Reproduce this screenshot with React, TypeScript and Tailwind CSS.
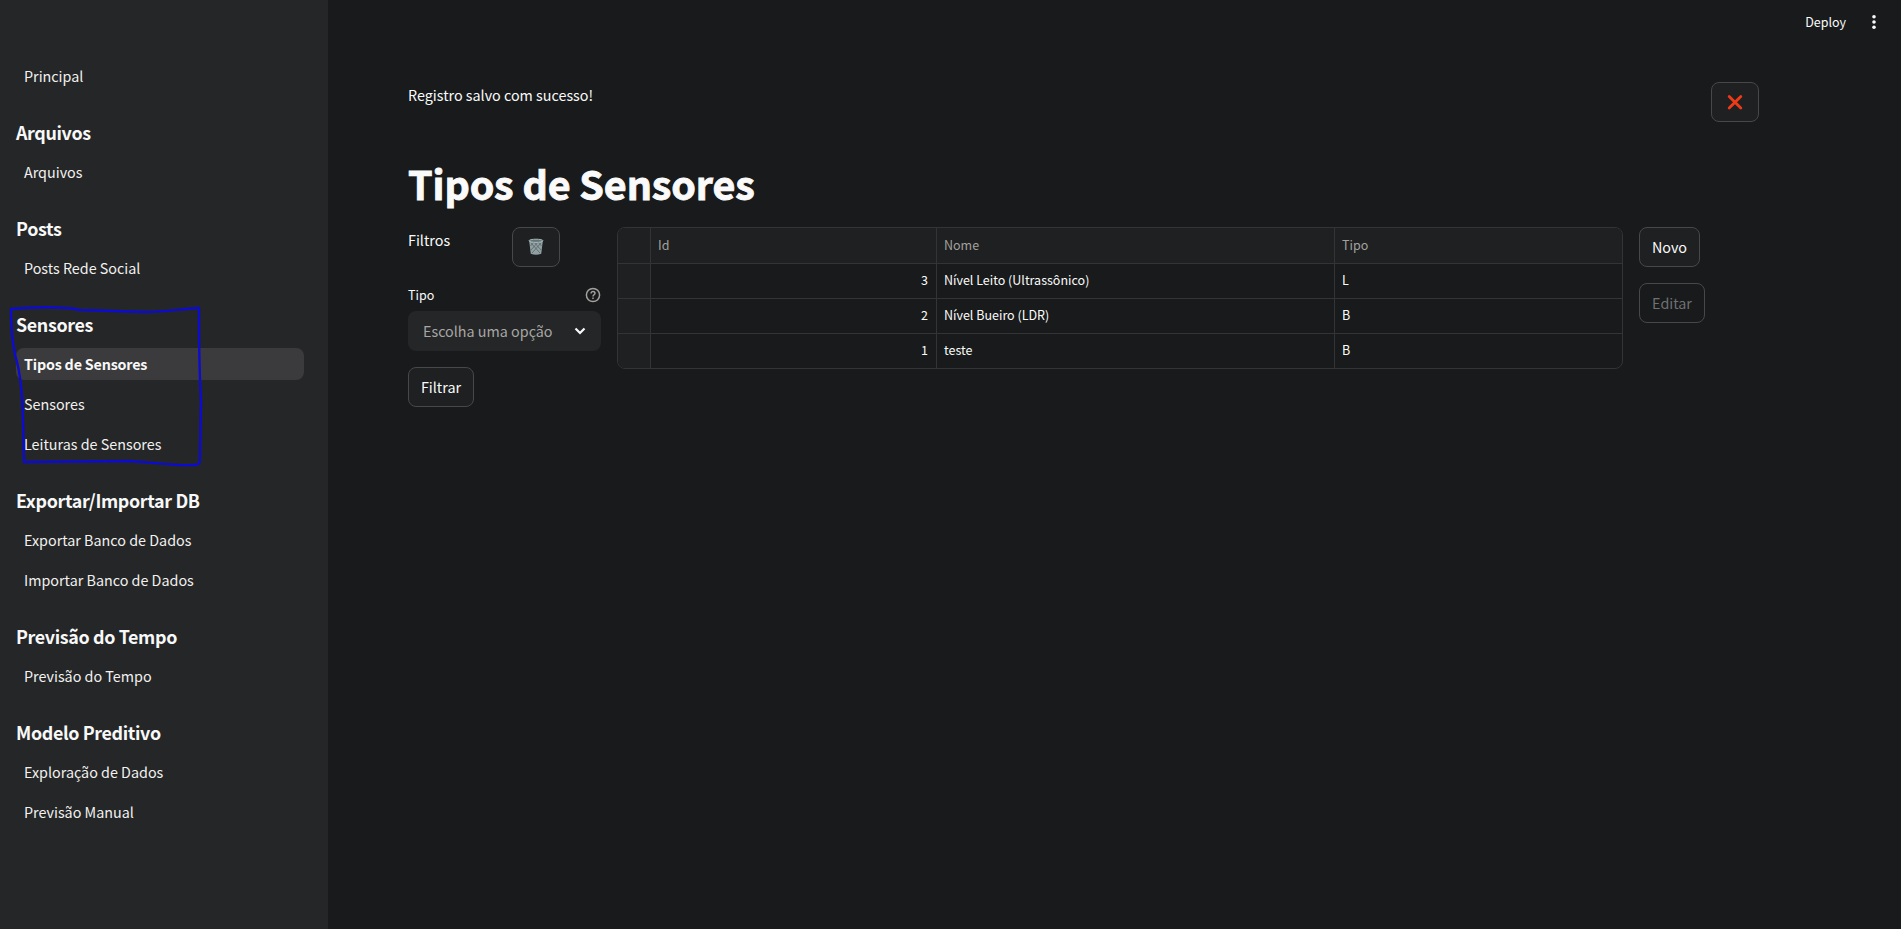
import React from "react";

type Section = { title?: string; items: string[] };

const sections: Section[] = [
  { items: ["Principal"] },
  { title: "Arquivos", items: ["Arquivos"] },
  { title: "Posts", items: ["Posts Rede Social"] },
  { title: "Sensores", items: ["Tipos de Sensores", "Sensores", "Leituras de Sensores"] },
  { title: "Exportar/Importar DB", items: ["Exportar Banco de Dados", "Importar Banco de Dados"] },
  { title: "Previsão do Tempo", items: ["Previsão do Tempo"] },
  { title: "Modelo Preditivo", items: ["Exploração de Dados", "Previsão Manual"] },
];

const rows = [
  { id: 3, nome: "Nível Leito (Ultrassônico)", tipo: "L" },
  { id: 2, nome: "Nível Bueiro (LDR)", tipo: "B" },
  { id: 1, nome: "teste", tipo: "B" },
];

function Sidebar() {
  return (
    <nav className="relative flex w-[328px] shrink-0 flex-col gap-6 bg-[#242627] px-4 pt-[60px]">
      {sections.map((s, i) => (
        <div key={i} className="flex flex-col gap-2">
          {s.title && <h2 className="h-8 text-[17.9px] leading-[33px] font-semibold tracking-[-0.36px] text-[#f8f8f8]">{s.title}</h2>}
          {s.items.map((item) => (
            <a
              key={item}
              className={
                item === "Tipos de Sensores"
                  ? "mr-2 h-8 rounded-lg bg-[#3b3b3d] px-2 text-[14.3px] leading-8 font-semibold tracking-[-0.18px] text-[#f8f8f8]"
                  : "mr-2 h-8 px-2 text-[14.33px] leading-8 text-[#f2f1ef]"
              }
            >
              {item}
            </a>
          ))}
        </div>
      ))}
      <svg className="absolute top-[300px] left-0" width="220" height="170" viewBox="0 300 220 170" fill="none" stroke="#0d0bd0" strokeWidth="2.4" strokeLinecap="round" strokeLinejoin="round">
        <path d="M199 308 C180 309 165 312 145 312 L80 310 C62 306 30 307 11 309 C11 335 14 352 17 362 C23 385 23 420 24 462 L130 461 C155 463 180 466 194 465 C200 465 200 463 200 455 L201 400 C199 370 199 340 199 308" />
      </svg>
    </nav>
  );
}

const button = "flex h-10 items-center justify-center rounded-lg border border-[#464849] bg-[#1e2021] text-[14.33px] text-[#fafafa]";

export default function App() {
  return (
    <div className="flex h-[929px] w-[1901px] overflow-hidden bg-[#181a1b] font-['Noto_Sans_CJK_SC',sans-serif] text-[#fafafa]">
      <Sidebar />
      <main className="flex flex-1 flex-col">
        <header className="flex h-[45px] items-center justify-end gap-[20px] pr-[19px] pb-[2px]">
          <span className="text-[12.5px] leading-5">Deploy</span>
          <svg width="16" height="16" viewBox="0 0 16 16" fill="#fafafa">
            <circle cx="8" cy="2.8" r="1.8" />
            <circle cx="8" cy="8" r="1.8" />
            <circle cx="8" cy="13.2" r="1.8" />
          </svg>
        </header>
        <div className="flex flex-col pt-[37px] pl-20">
          <div className="flex w-[1351px] justify-between">
            <p className="pt-[1px] text-[14.33px] leading-6">Registro salvo com sucesso!</p>
            <button className={`${button} w-12`}>
              <svg width="16" height="16" viewBox="0 0 16 16" fill="none" stroke="#f03a17" strokeWidth="2.8" strokeLinecap="round">
                <path d="M2.2 2.4 L13.8 14 M13.8 2.4 L2.2 14" />
              </svg>
            </button>
          </div>
          <h1 className="mt-[34px] h-[55px] text-[39.4px] leading-[53px] font-bold tracking-[-0.08px] [-webkit-text-stroke:0.9px_#fafafa]">Tipos de Sensores</h1>
          <div className="mt-4 flex items-start gap-4">
            <section className="flex w-[193px] flex-col">
              <div className="flex">
                <p className="w-[104px] pt-[1px] text-[14.33px] leading-6">Filtros</p>
                <button className={`${button} w-12`}>
                  <svg width="16" height="18" viewBox="0 0 16 18">
                    <path d="M1.2 3 L2.8 15.8 Q8 17.6 13.2 15.8 L14.8 3Z" fill="#91a1a3" />
                    <path d="M3 5 L12 15 M6 4 L13 12 M10 4 L13.5 8 M13 5 L4 15 M10 4 L3 12 M6 4 L2.5 8" stroke="#56646a" strokeWidth="0.8" />
                    <ellipse cx="8" cy="2.8" rx="7" ry="1.6" fill="#66757a" stroke="#a9b8ba" />
                  </svg>
                </button>
              </div>
              <div className="mt-4 flex h-6 items-center justify-between">
                <span className="text-[12.5px] leading-6">Tipo</span>
                <svg width="16" height="16" viewBox="0 0 16 16" fill="none" stroke="#a3a19e" strokeWidth="1.5">
                  <circle cx="8" cy="8" r="6.6" />
                  <path d="M6 6.4 C6 3.8 10 3.9 10 6.3 C10 7.8 8 7.7 8 9.4" />
                  <path d="M8 10.6 V12" />
                </svg>
              </div>
              <div className="mt-1 flex h-10 items-center justify-between rounded-lg bg-[#242627] pr-[15px] pl-[15px] text-[14.33px] text-[#a8a7a5]">
                <span>Escolha uma opção</span>
                <svg width="12" height="8" viewBox="0 0 12 8" fill="none" stroke="#fafafa" strokeWidth="2.2">
                  <path d="M1.5 1.5 L6 6 L10.5 1.5" />
                </svg>
              </div>
              <button className={`${button} mt-4 w-[66px]`}>Filtrar</button>
            </section>
            <div className="w-[1006px] overflow-hidden rounded-lg border border-[#323435] text-[12.5px]">
              <div className="grid h-[35px] grid-cols-[33px_286px_398px_1fr] divide-x divide-[#323435] bg-[#1e2021] leading-[34px] text-[#a3a19e]">
                <span />
                <span className="px-[7px]">Id</span>
                <span className="px-[7px]">Nome</span>
                <span className="px-[7px]">Tipo</span>
              </div>
              {rows.map((r) => (
                <div key={r.id} className="grid h-[35px] grid-cols-[33px_286px_398px_1fr] divide-x divide-[#323435] border-t border-[#323435] leading-[32px]">
                  <span className="bg-[#1e2021]" />
                  <span className="px-2 text-right">{r.id}</span>
                  <span className="px-[7px]">{r.nome}</span>
                  <span className="px-[7px]">{r.tipo}</span>
                </div>
              ))}
            </div>
            <div className="flex flex-col items-start gap-4">
              <button className={`${button} w-[61px]`}>Novo</button>
              <button className="flex h-10 w-[66px] items-center justify-center rounded-lg border border-[#464849] text-[14.33px] text-[#6f7172]">Editar</button>
            </div>
          </div>
        </div>
      </main>
    </div>
  );
}
